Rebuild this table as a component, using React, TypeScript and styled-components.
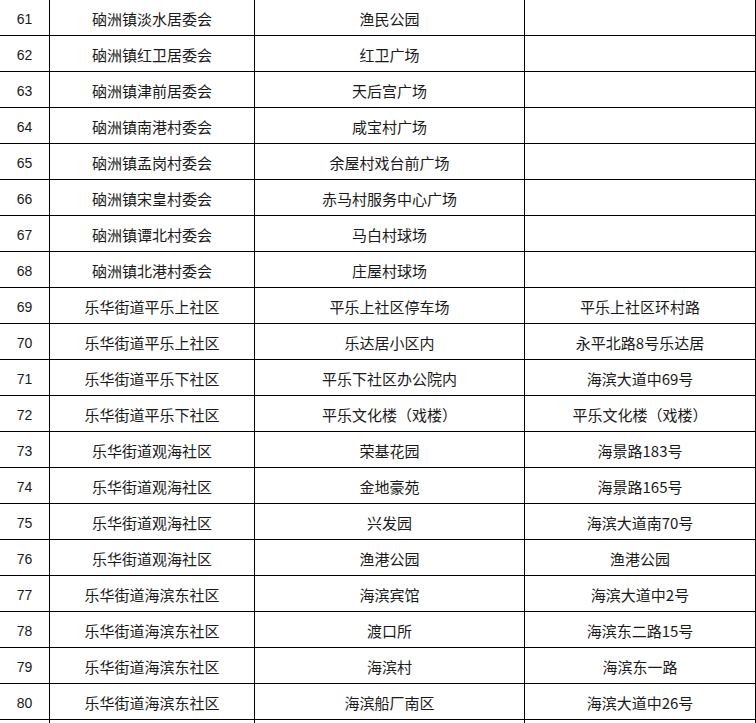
import React from "react";
import styled, { createGlobalStyle } from "styled-components";

const Global = createGlobalStyle`
  html, body { margin: 0; padding: 0; background: #ffffff; overflow: hidden; }
`;

const Page = styled.div`
  width: 756px;
  height: 723px;
  overflow: hidden;
  background: #fff;
`;

const Table = styled.table`
  border-collapse: collapse;
  table-layout: fixed;
  width: 757px;
  margin: -1px 0 0 -1px;
  font-family: "Noto Sans CJK SC", "Liberation Sans", sans-serif;
  color: #1a1a1a;
`;

const Col = styled.col<{ $w: number }>`
  width: ${(p) => p.$w}px;
`;

const Row = styled.tr`
  height: 36px;
`;

const Cell = styled.td<{ $num?: boolean }>`
  border: 1px solid #000;
  padding: 2px 0 0 0;
  text-align: center;
  vertical-align: middle;
  font-size: ${(p) => (p.$num ? "14px" : "15px")};
  font-family: ${(p) =>
    p.$num ? '"Liberation Sans", Arial, sans-serif' : '"Noto Sans CJK SC", "Liberation Sans", sans-serif'};
  line-height: 20px;
  white-space: nowrap;
  overflow: hidden;
`;

const rows: [number, string, string, string][] = [
  [61, "硇洲镇淡水居委会", "渔民公园", ""],
  [62, "硇洲镇红卫居委会", "红卫广场", ""],
  [63, "硇洲镇津前居委会", "天后宫广场", ""],
  [64, "硇洲镇南港村委会", "咸宝村广场", ""],
  [65, "硇洲镇孟岗村委会", "余屋村戏台前广场", ""],
  [66, "硇洲镇宋皇村委会", "赤马村服务中心广场", ""],
  [67, "硇洲镇谭北村委会", "马白村球场", ""],
  [68, "硇洲镇北港村委会", "庄屋村球场", ""],
  [69, "乐华街道平乐上社区", "平乐上社区停车场", "平乐上社区环村路"],
  [70, "乐华街道平乐上社区", "乐达居小区内", "永平北路8号乐达居"],
  [71, "乐华街道平乐下社区", "平乐下社区办公院内", "海滨大道中69号"],
  [72, "乐华街道平乐下社区", "平乐文化楼（戏楼）", "平乐文化楼（戏楼）"],
  [73, "乐华街道观海社区", "荣基花园", "海景路183号"],
  [74, "乐华街道观海社区", "金地豪苑", "海景路165号"],
  [75, "乐华街道观海社区", "兴发园", "海滨大道南70号"],
  [76, "乐华街道观海社区", "渔港公园", "渔港公园"],
  [77, "乐华街道海滨东社区", "海滨宾馆", "海滨大道中2号"],
  [78, "乐华街道海滨东社区", "渡口所", "海滨东二路15号"],
  [79, "乐华街道海滨东社区", "海滨村", "海滨东一路"],
  [80, "乐华街道海滨东社区", "海滨船厂南区", "海滨大道中26号"],
  [81, "", "", ""],
];

const widths = [50, 205, 270, 231];

export default function App() {
  return (
    <Page>
      <Global />
      <Table>
        <colgroup>
          {widths.map((w, i) => (
            <Col key={i} $w={w} />
          ))}
        </colgroup>
        <tbody>
          {rows.map(([n, a, b, c]) => (
            <Row key={n}>
              <Cell $num>{n === 81 ? "" : n}</Cell>
              <Cell>{a}</Cell>
              <Cell>{b}</Cell>
              <Cell>{c}</Cell>
            </Row>
          ))}
        </tbody>
      </Table>
    </Page>
  );
}
